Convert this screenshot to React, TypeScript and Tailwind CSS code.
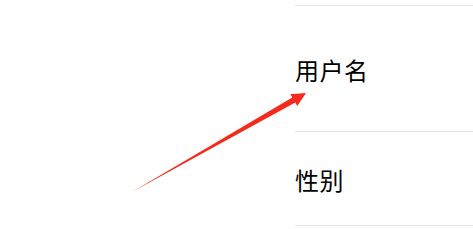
import React from 'react';

export default function App() {
  return (
    <div className="relative w-[473px] h-[229px] bg-white overflow-hidden" style={{ fontFamily: '"Noto Sans CJK SC", "Noto Sans", sans-serif' }}>
      <div className="flex h-full">
        {/* left blank area */}
        <div className="w-[295px] shrink-0" />

        {/* settings list */}
        <div className="flex-1 pt-[5px]">
          <div className="h-[126px] border-t border-[#e5e5e5] flex items-center">
            <span className="text-[24px] leading-none text-black mt-[3px] tracking-[0.5px]">用户名</span>
          </div>
          <div className="h-[95px] border-t border-b border-[#e5e5e5] flex items-center">
            <span className="text-[24px] leading-none text-black mt-[3px] tracking-[0.5px]">性别</span>
          </div>
        </div>
      </div>

      {/* annotation arrow */}
      <svg className="absolute inset-0 pointer-events-none" width="473" height="229" viewBox="0 0 473 229">
        <polygon
          points="132,192 295.3,102.6 297.3,106 306,93 290.3,94.2 292.3,97.4"
          fill="#f42a1d"
        />
      </svg>
    </div>
  );
}
